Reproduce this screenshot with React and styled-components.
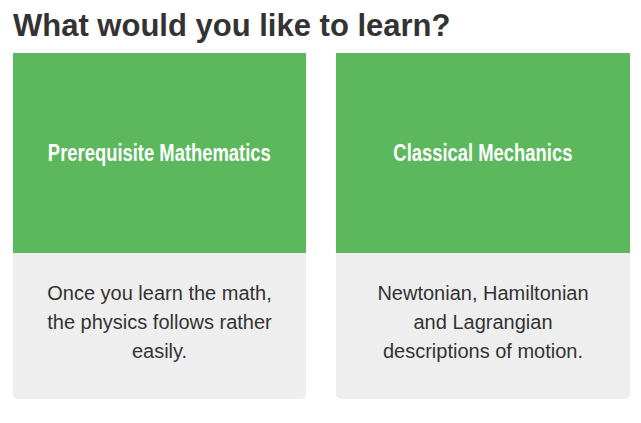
import React from "react";
import styled, { createGlobalStyle } from "styled-components";

const courses = [
  {
    title: "Prerequisite Mathematics",
    text: "Once you learn the math, the physics follows rather easily.",
  },
  {
    title: "Classical Mechanics",
    text: "Newtonian, Hamiltonian and Lagrangian descriptions of motion.",
  },
];

const App = () => {
  return (
    <Page>
      <GlobalStyle />
      <Heading>What would you like to learn?</Heading>
      <CardGrid>
        {courses.map((course) => (
          <Card key={course.title}>
            <CardTop>
              <CardTitle>{course.title}</CardTitle>
            </CardTop>
            <CardBody>{course.text}</CardBody>
          </Card>
        ))}
      </CardGrid>
    </Page>
  );
};

export default App;

const GlobalStyle = createGlobalStyle`
  body {
    margin: 0;
    background: #fff;
    font-family: "Liberation Sans", Arial, sans-serif;
    color: #333;
  }
`;

const Page = styled.div`
  padding: 9px 11px 0 13px;
`;

const Heading = styled.h1`
  margin: 0 0 10px;
  font-size: 31px;
  line-height: 34px;
  font-weight: bold;
  color: #333;
`;

const CardGrid = styled.div`
  display: grid;
  grid-template-columns: 293px 294px;
  gap: 30px;
`;

const Card = styled.div`
  display: flex;
  flex-direction: column;
`;

const CardTop = styled.div`
  height: 200px;
  background-color: #5cb85c;
  display: flex;
  align-items: center;
  justify-content: center;
`;

/* condensed bold face: no narrow family installed, so squeeze horizontally */
const CardTitle = styled.h2`
  display: inline-block;
  margin: 0;
  font-size: 23px;
  line-height: 26px;
  font-weight: bold;
  color: #fff;
  white-space: nowrap;
  transform: scaleX(0.8);
`;

const CardBody = styled.p`
  margin: 0;
  padding: 26px 28px 33px;
  background-color: #eee;
  border-radius: 0 0 5px 5px;
  font-size: 20px;
  line-height: 29px;
  text-align: center;
  color: #333;
`;
